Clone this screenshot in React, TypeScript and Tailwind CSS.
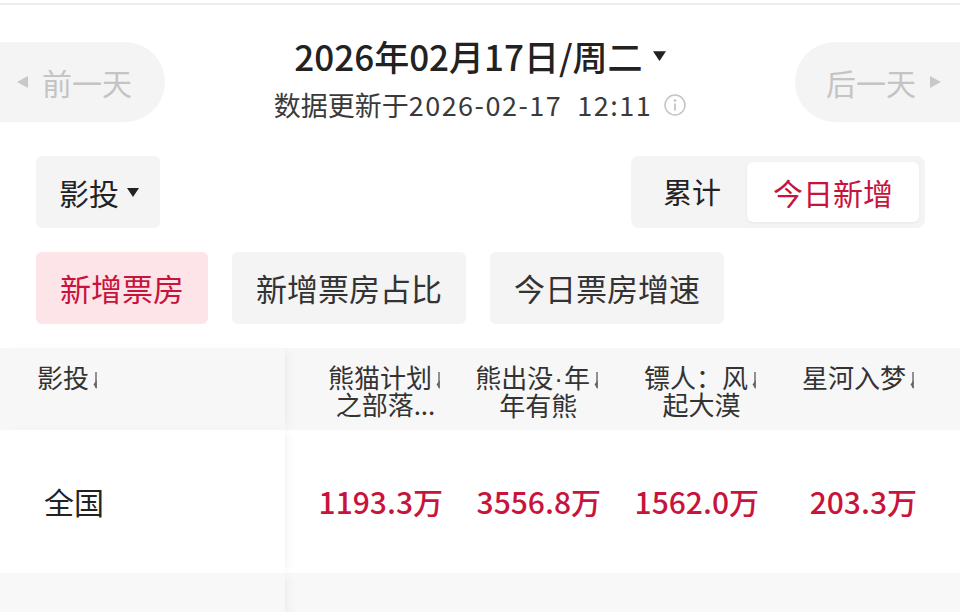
import React from "react";

const RED = "text-[#c8143c]";

function SortArrow() {
  return (
    <svg width="10" height="22" viewBox="0 0 10 22" className="inline-block ml-[1px] align-[-3px]">
      <path d="M6 3 L6 19" stroke="#666" strokeWidth="1.4" />
      <path d="M6.7 11 L6.7 20 L3.5 15.5 Z" fill="#666" />
    </svg>
  );
}

function DownTri({ w, h, color }: { w: number; h: number; color: string }) {
  return (
    <svg width={w} height={h} viewBox="0 0 12 9" className="inline-block">
      <path d="M0 0 L12 0 L6 9 Z" fill={color} />
    </svg>
  );
}

const Dot = () => (
  <span style={{ fontFamily: '"Liberation Sans", sans-serif' }} className="px-[1px]">
    ·
  </span>
);

const cols: { l1: React.ReactNode; l2: string; v: string; k: string }[] = [
  { k: "a", l1: "熊猫计划", l2: "之部落...", v: "1193.3万" },
  {
    k: "b",
    l1: (
      <>
        熊出没
        <Dot />年
      </>
    ),
    l2: "年有熊",
    v: "3556.8万",
  },
  { k: "c", l1: "镖人：风", l2: "起大漠", v: "1562.0万" },
  { k: "d", l1: "星河入梦", l2: "", v: "203.3万" },
];

export default function App() {
  return (
    <div
      className="w-[960px] h-[612px] overflow-hidden bg-white text-[#222]"
      style={{ fontFamily: '"Noto Sans CJK SC", "Noto Sans", sans-serif' }}
    >
      <div className="mt-[3px] h-[2px] bg-[#ededed]" />

      {/* header */}
      <div className="mt-[37px] flex items-start h-[80px]">
        <div className="ml-[-35px] w-[200px] h-[80px] rounded-full bg-[#f4f4f4] flex items-center pl-[52px] text-[#c4c4c4] text-[30px] leading-none">
          <svg width="11" height="12" viewBox="0 0 11 12" className="mr-[14px]">
            <path d="M11 0 L11 12 L0 6 Z" fill="#c8c8c8" />
          </svg>
          前一天
        </div>
        <div className="flex-1 h-[80px] flex flex-col items-center">
          <div className="mt-[-8px] flex items-center text-[35px] leading-[44px] font-medium text-[#222]">
            2026年02月17日/周二
            <span className="ml-[10px] flex items-center">
              <DownTri w={13} h={10} color="#222" />
            </span>
          </div>
          <div className="mt-[10px] flex items-center text-[27px] leading-[34px] text-[#3a3a3a] whitespace-nowrap">
            数据更新于
            <span className="tracking-[1.5px]">2026-02-17&nbsp;&nbsp;12:11</span>
            <svg width="22" height="22" viewBox="0 0 22 22" className="ml-[12px]">
              <circle cx="11" cy="11" r="10" fill="none" stroke="#c4c4c4" strokeWidth="1.5" />
              <circle cx="11" cy="6.5" r="1.3" fill="#c4c4c4" />
              <path d="M11 9.5 L11 16.5" stroke="#c4c4c4" strokeWidth="1.8" />
            </svg>
          </div>
        </div>
        <div className="mr-[-35px] w-[200px] h-[80px] rounded-full bg-[#f4f4f4] flex items-center pl-[31px] text-[#c4c4c4] text-[30px] leading-none">
          后一天
          <svg width="11" height="12" viewBox="0 0 11 12" className="ml-[14px]">
            <path d="M0 0 L0 12 L11 6 Z" fill="#c8c8c8" />
          </svg>
        </div>
      </div>

      {/* filter row */}
      <div className="mt-[34px] px-[36px] flex items-center justify-between">
        <div className="h-[72px] w-[124px] rounded-[6px] bg-[#f4f4f4] flex items-center pl-[23px] text-[30px] text-[#222]">
          影投
          <span className="ml-[8px] flex items-center">
            <DownTri w={12} h={9} color="#222" />
          </span>
        </div>
        <div className="h-[72px] w-[294px] mr-[-1px] rounded-[8px] bg-[#f4f4f4] flex items-center p-[6px]">
          <div className="w-[110px] flex justify-center text-[29px] text-[#222]">累计</div>
          <div className={`flex-1 h-full rounded-[6px] bg-white shadow-[0_1px_3px_rgba(0,0,0,0.06)] flex items-center justify-center text-[30px] ${RED}`}>
            今日新增
          </div>
        </div>
      </div>

      {/* tabs */}
      <div className="mt-[24px] px-[36px] flex gap-[24px]">
        <div className={`h-[72px] px-[24px] rounded-[6px] bg-[#fde4e8] flex items-center text-[31px] ${RED}`}>
          新增票房
        </div>
        <div className="h-[72px] px-[24px] rounded-[6px] bg-[#f4f4f4] flex items-center text-[31px] text-[#333]">
          新增票房占比
        </div>
        <div className="h-[72px] px-[24px] rounded-[6px] bg-[#f4f4f4] flex items-center text-[31px] text-[#333]">
          今日票房增速
        </div>
      </div>

      {/* table */}
      <div className="mt-[24px]">
        <div className="flex h-[82px] bg-[#f7f7f7] text-[26px] leading-[26px] text-[#333]">
          <div className="w-[285px] shrink-0 pl-[37px] pt-[16px] bg-[#f7f7f7] relative z-10 shadow-[6px_0_10px_-4px_rgba(0,0,0,0.06)]">
            影投
            <SortArrow />
          </div>
          {cols.map((c) => (
            <div key={c.k} className="w-[158px] shrink-0 flex justify-end pt-[16px]">
              <div className="flex flex-col items-center">
                <div className="whitespace-nowrap">
                  {c.l1}
                  <SortArrow />
                </div>
                {c.l2 && <div className="whitespace-nowrap">{c.l2}</div>}
              </div>
            </div>
          ))}
        </div>
        <div className="flex h-[143px] bg-white items-center">
          <div className="w-[285px] h-full shrink-0 pl-[44px] flex items-center text-[30px] text-[#222] bg-white relative z-10 shadow-[6px_0_10px_-4px_rgba(0,0,0,0.06)]">
            全国
          </div>
          {cols.map((c) => (
            <div key={c.k} className={`w-[158px] shrink-0 flex justify-end text-[30px] font-medium ${RED}`}>
              {c.v}
            </div>
          ))}
        </div>
        <div className="flex h-[60px] bg-[#f8f8f8]">
          <div className="w-[285px] h-full shrink-0 bg-[#f8f8f8] relative z-10 shadow-[6px_0_10px_-4px_rgba(0,0,0,0.06)]" />
        </div>
      </div>
    </div>
  );
}
